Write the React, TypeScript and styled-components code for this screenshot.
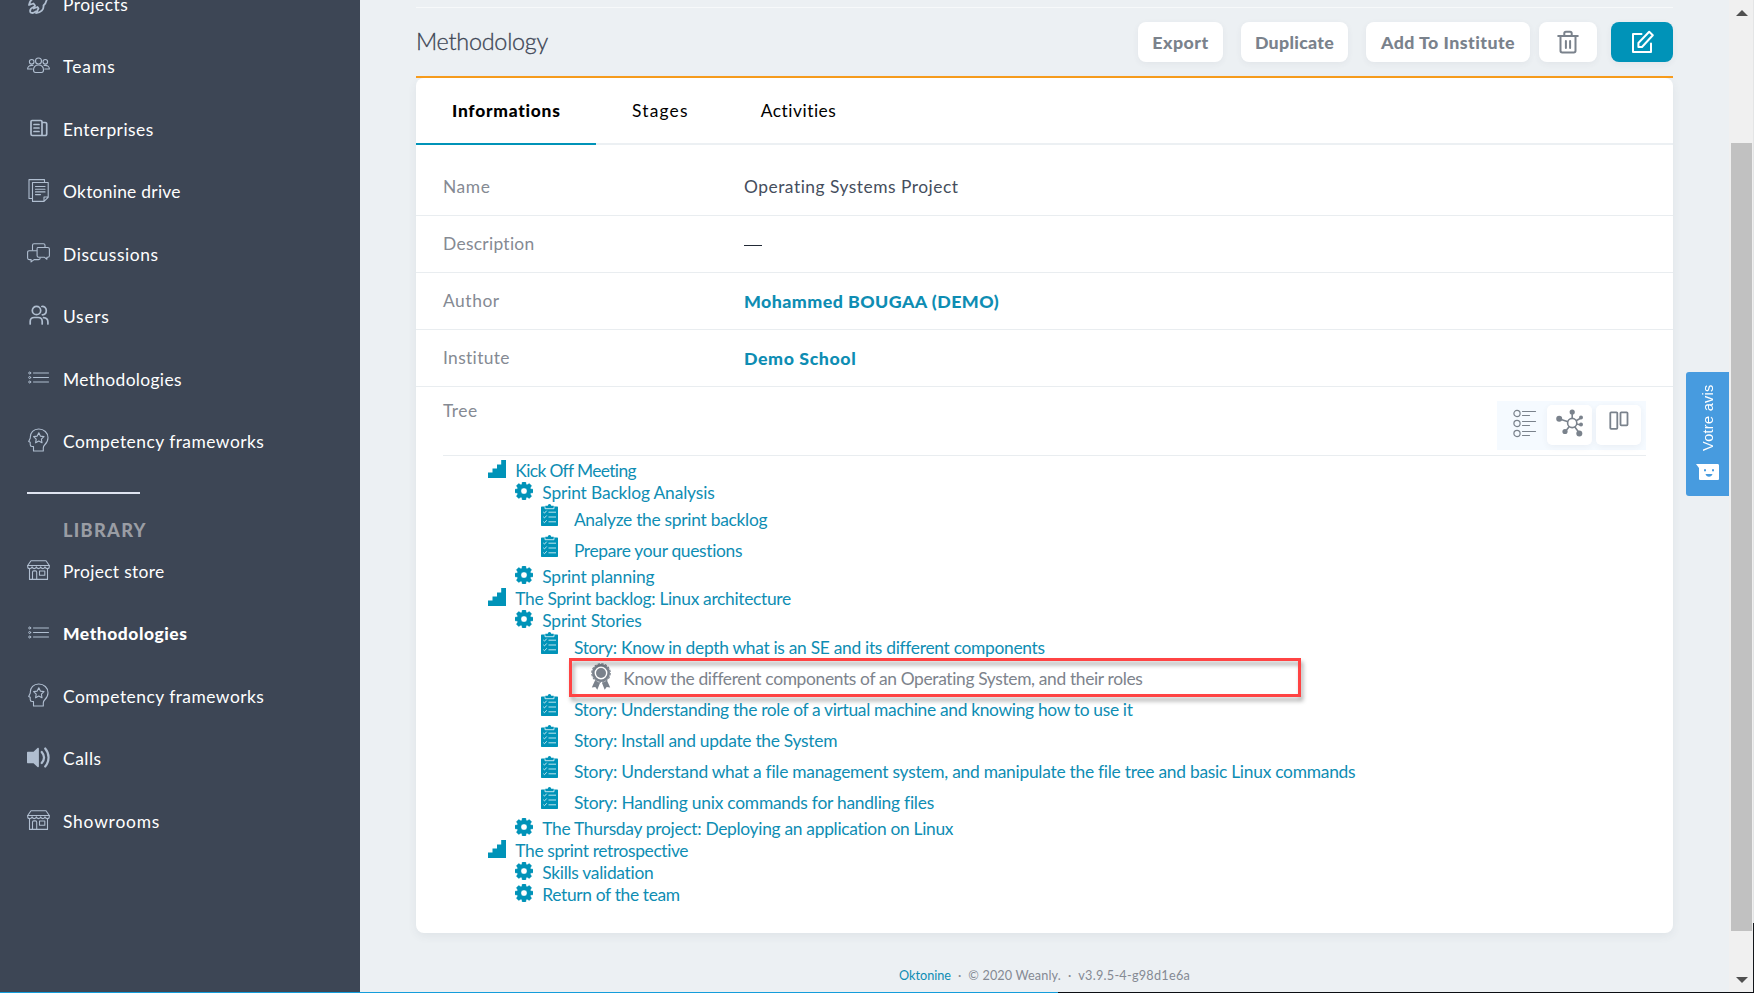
import React from 'react';
import styled, { createGlobalStyle, css } from 'styled-components';

const GlobalStyle = createGlobalStyle`
  * { box-sizing: border-box; }
  html, body { margin: 0; height: 100%; overflow: hidden; }
  body { font-family: Lato, "Open Sans", sans-serif; font-size: 17.4px; background: #ecf0f3; }
  #root { height: 100vh; }
  svg { display: block; flex: none; }
`;

/* ---------- shell ---------- */

const Page = styled.div`
  position: relative;
  display: grid;
  grid-template-rows: 1fr 1px;
  width: 1754px;
  height: 993px;
  overflow: hidden;
`;

const Shell = styled.div`
  display: grid;
  grid-template-columns: 360px 1369px 24px 1px;
  min-height: 0;
`;

const BottomEdge = styled.div`
  background: linear-gradient(to right, #149ddb 1058px, #0a0d12 1058px);
`;

const RightEdge = styled.div`
  background: linear-gradient(to bottom, #e4e5e6 923px, #14171b 923px);
`;

/* ---------- sidebar ---------- */

const Sidebar = styled.nav`
  display: flex;
  flex-direction: column;
  overflow: hidden;
  background: #3d4655;
  color: #fff;
`;

const NavList = styled.div<{ $scrolled?: boolean }>`
  display: flex;
  flex-direction: column;
  flex: none;
  margin-top: ${p => (p.$scrolled ? '-27px' : '0')};
`;

const NavItem = styled.a<{ $active?: boolean }>`
  display: flex;
  align-items: center;
  gap: 13px;
  height: 62.5px;
  padding-left: 27px;
  font-weight: ${p => (p.$active ? 900 : 400)};
`;

const NavIcon = styled.span`
  display: flex;
  justify-content: center;
  width: 23px;
  padding-bottom: 3px;
  color: #b0bed0;
`;

const Text = styled.span<{ $ls?: number }>`
  letter-spacing: ${p => p.$ls ?? 0}px;
  white-space: nowrap;
`;

const NavRule = styled.hr`
  width: 113px;
  height: 2px;
  flex: none;
  margin: 19px 0 25px 27px;
  border: 0;
  background: #dfe4f0;
`;

const NavHeading = styled.h2`
  flex: none;
  height: 21px;
  margin: 0;
  padding-left: 63px;
  font-size: 18.2px;
  line-height: 23px;
  font-weight: 900;
  letter-spacing: 1.3px;
  color: #9a9da4;
`;

/* ---------- main ---------- */

const Main = styled.main`
  display: flex;
  flex-direction: column;
  padding: 7px 56px 0;
  background: #ecf0f3;
`;

const PageHeader = styled.header`
  display: flex;
  align-items: center;
  justify-content: space-between;
  height: 71px;
  border-top: 1px solid #f7f9fa;
  border-bottom: 2px solid #f99d1c;
`;

const Title = styled.h1`
  margin: 0;
  padding-bottom: 2px;
  font-size: 23.4px;
  line-height: 28px;
  font-weight: 300;
  letter-spacing: -0.25px;
  color: #3d4655;
  -webkit-text-stroke: 0.3px #3d4655;
`;

const Actions = styled.div`
  display: flex;
`;

const Button = styled.button<{ $width: number; $gap?: number; $primary?: boolean }>`
  display: flex;
  align-items: center;
  justify-content: center;
  width: ${p => p.$width}px;
  height: 40px;
  margin-left: ${p => p.$gap ?? 0}px;
  padding: 0 0 1px;
  border: 0;
  border-radius: 8px;
  font: 900 17.8px Lato, sans-serif;
  color: ${p => (p.$primary ? '#fff' : '#7a828c')};
  background: ${p => (p.$primary ? '#0093b8' : '#fff')};
  box-shadow: 0 2px 6px rgba(60, 75, 90, 0.06);
`;

const Card = styled.section`
  display: flex;
  flex-direction: column;
  height: 855px;
  border-radius: 8px;
  background: #fff;
  box-shadow: 0 3px 10px rgba(60, 75, 90, 0.07);
`;

const Tabs = styled.div`
  display: flex;
  height: 67px;
  border-bottom: 2px solid #ecf0f3;
`;

const Tab = styled.a<{ $active?: boolean }>`
  height: 67px;
  padding: 21px 36px 0;
  line-height: 24px;
  color: #000;
  ${p => p.$active && css`
    width: 180px;
    font-weight: 900;
    border-bottom: 2px solid #0093b8;
  `}
`;

const Fields = styled.dl`
  margin: 0;
  padding-top: 14px;
`;

const Field = styled.div`
  display: grid;
  grid-template-columns: 301px 1fr;
  height: 57px;
  padding: 0 27px;
  line-height: 56px;
  border-bottom: 1px solid #e9edf0;
`;

const FieldName = styled.dt`
  color: #858a93;
`;

const FieldValue = styled.dd<{ $link?: boolean }>`
  margin: 0;
  font-size: ${p => (p.$link ? 17.8 : 17.4)}px;
  color: ${p => (p.$link ? '#0e8db3' : '#454e5d')};
  font-weight: ${p => (p.$link ? 900 : 400)};
`;

const Dash = styled.span`
  display: inline-block;
  width: 18px;
  height: 1px;
  vertical-align: 4px;
  background: #222a36;
`;

const TreePanel = styled.div`
  padding: 0 27px;
`;

const TreeHeader = styled.div`
  display: flex;
  justify-content: space-between;
  height: 69px;
  padding-top: 14px;
  border-bottom: 1px solid #e9edf0;
  color: #858a93;
  line-height: 19px;
`;

const ViewSwitch = styled.div`
  display: flex;
  gap: 4px;
  height: 49px;
  padding: 4px 5px;
  background: #f5faff;
  color: #7a828c;
`;

const ViewButton = styled.button<{ $active?: boolean }>`
  display: flex;
  align-items: flex-start;
  justify-content: center;
  width: ${p => (p.$active ? 41 : 45)}px;
  height: 40px;
  padding: 4px 0 0 ${p => (p.$active ? 5 : 0)}px;
  border: 0;
  border-radius: 5px;
  color: inherit;
  background: ${p => (p.$active ? 'transparent' : '#fff')};
  box-shadow: ${p => (p.$active ? 'none' : '0 2px 6px rgba(60, 75, 90, 0.06)')};
`;

/* ---------- tree ---------- */

type Kind = 'stage' | 'activity' | 'task' | 'skill';

const indent: Record<Kind, number> = { stage: 45, activity: 72, task: 97.5, skill: 147.5 };
const iconColumn: Record<Kind, number> = { stage: 27.3, activity: 27.3, task: 33.4, skill: 32.8 };

const TreeList = styled.ul`
  margin: 0;
  padding: 4px 0 0;
  list-style: none;
`;

const TreeRow = styled.li<{ $kind: Kind }>`
  position: relative;
  display: grid;
  grid-template-columns: ${p => iconColumn[p.$kind]}px auto;
  justify-content: start;
  height: ${p => (p.$kind === 'task' || p.$kind === 'skill' ? 31 : 22)}px;
  padding-left: ${p => indent[p.$kind]}px;
  line-height: ${p => (p.$kind === 'task' || p.$kind === 'skill' ? 31 : 22)}px;
  color: ${p => (p.$kind === 'skill' ? '#7d838c' : '#0e8db3')};
  svg { color: ${p => (p.$kind === 'skill' ? '#7a828c' : '#0093b8')}; }
`;

const Highlight = styled.span`
  position: absolute;
  left: 126px;
  top: -5px;
  width: 732px;
  height: 39px;
  border: 3px solid #ff4343;
  filter: drop-shadow(2px 4px 2px rgba(0, 0, 0, 0.35));
`;

/* ---------- footer, scrollbar, feedback ---------- */

const Footer = styled.footer`
  display: flex;
  justify-content: center;
  gap: 7px;
  padding: 33px 0 0;
  font-size: 12.7px;
  line-height: 18px;
  color: #858a93;
`;

const FooterLink = styled.a`
  color: #0e8db3;
`;

const Scrollbar = styled.div`
  display: grid;
  grid-template-rows: 143px 788px 61px;
  padding: 0 1px 0 2px;
  background: #f0f0f0;
`;

const ScrollEnd = styled.div<{ $bottom?: boolean }>`
  display: flex;
  justify-content: center;
  align-items: ${p => (p.$bottom ? 'flex-end' : 'flex-start')};
  padding: 10px 0 9px;
`;

const ScrollThumb = styled.div`
  background: #c1c1c1;
`;

const Feedback = styled.button`
  position: absolute;
  left: 1686px;
  top: 372px;
  display: flex;
  flex-direction: column;
  align-items: center;
  gap: 12px;
  width: 43px;
  height: 124px;
  padding: 12px 0 0;
  border: 0;
  border-radius: 3px 0 0 3px;
  background: #479bdf;
  color: #fff;
`;

const FeedbackText = styled.span`
  height: 68px;
  writing-mode: vertical-rl;
  transform: rotate(180deg);
  font: 14.5px/18px "Liberation Sans", sans-serif;
  letter-spacing: 0.3px;
  white-space: nowrap;
`;

/* ---------- icons ---------- */

const Line = ({ w = 23, h = 23, sw = 1.1, children }: { w?: number; h?: number; sw?: number; children: React.ReactNode }) => (
  <svg width={w} height={h} viewBox={`0 0 ${w} ${h}`} fill="none" stroke="currentColor" strokeWidth={sw} strokeLinejoin="round" strokeLinecap="round">
    {children}
  </svg>
);

const RocketIcon = () => (
  <Line sw={1.8}>
    <path d="M20.500 2c-1 .5-8 1-11 5.500-3.800-.6-6.500 1.500-7.500 6.500l4.500-1.500 1.500 2-1.500 3 4-1.500 1 1.500-2.500 4.500c5-.5 8-3.500 7.500-7.500C20 11.500 20.500 6.500 20.500 2z" />
    <path d="M6.500 16c-2.500 1-4 3-3 5.500 2 .8 4 .3 5-1" />
  </Line>
);

const TeamIcon = () => (
  <Line h={17}>
    <circle cx="11.500" cy="4" r="3" />
    <circle cx="4.700" cy="4.800" r="2.300" />
    <circle cx="18.300" cy="4.800" r="2.300" />
    <path d="M6.500 13c0-3.200 1.800-5 5-5s5 1.800 5 5c0 1.800-.6 2.500-2 2.500h-6c-1.400 0-2-.7-2-2.500z" />
    <path d="M6 8.500C2.500 8 .6 9.500.6 12h4.600M17 8.500c3.500-.5 5.400 1 5.400 3.500h-4.600" />
  </Line>
);

const EnterpriseIcon = () => (
  <Line w={18} h={18} sw={1.700}>
    <path d="M2 1.500h8.800c.8 0 1.200.4 1.200 1.200v13.800H2.500c-1 0-1.500-.6-1.500-1.500V2.500c0-.6.4-1 1-1zM12 3.500h3.300c.8 0 1.400.5 1.400 1.300v9.900c0 1.100-.6 1.800-1.600 1.800H12" />
    <path d="M4 5.500h5M4 9h5M4 12.500h5" />
  </Line>
);

const DriveIcon = () => (
  <Line w={21}>
    <path d="M4.500 3.500h15.700v14.800L16 22.400H4.500zM20 18h-4v4.400" />
    <path d="M4 19.500H1V.6h15.500v2.400M7.500 7.500h9.500M7.500 10.200h9.500M7.500 12.900h9.500M7.500 15.600h5" />
  </Line>
);

const DiscussionIcon = () => (
  <Line h={20}>
    <path d="M5.500 7V2.200C5.500 1.300 6 .8 7 .8h9.500c1 0 1.500.5 1.500 1.400v1.600" />
    <path d="M10.700 4.500h10c1.200 0 1.700.5 1.700 1.600v6.600c0 1-.5 1.600-1.600 1.600h-.9v2l-2.300-2h-5.900c-1.100 0-1.600-.6-1.600-1.600V5.800c0-.8.300-1.300.6-1.300z" />
    <path d="M9.500 7.800H2.200C1 7.800.6 8.400.6 9.400V15c0 1 .6 1.600 1.600 1.600h1.900v2.300l3-2.300h4.400c1 0 1.700-.5 1.700-1.600" />
  </Line>
);

const UsersIcon = () => (
  <Line w={20} h={20} sw={1.700}>
    <circle cx="7.500" cy="5.500" r="4.200" />
    <path d="M12.800 1.500c2.500-.3 4.500 1.600 4.500 4s-1.600 4.100-4 4.300M1.200 19v-2.500c0-2.600 1.400-4 4-4h4c2.600 0 4 1.400 4 4V19M14.500 12.700c3 .2 4.400 1.500 4.400 4.300v2" />
  </Line>
);

const ListIcon = () => (
  <Line w={21} h={13} sw={1}>
    <circle cx="1.700" cy="2" r="1" /><circle cx="1.700" cy="6.500" r="1" /><circle cx="1.700" cy="11" r="1" />
    <path d="M5.500 2h15M5.500 6.500h15M5.500 11h15" />
  </Line>
);

const HeadStarIcon = () => (
  <Line w={21} h={24}>
    <path d="M5.500 23v-4.500H4c-1.300 0-1.800-.7-1.800-2v-2.200l-1.500-.8L2.300 10C2 4.500 5.800 1 10.700 1c5.300 0 9.300 3.800 9.300 8.700 0 3.600-1.500 5.500-3.400 7.300-.9.900-1.300 1.700-1.300 3V23z" />
    <path d="M10.800 4.800l1.600 3.300 3.600.5-2.600 2.600.6 3.600-3.200-1.700-3.200 1.700.6-3.600-2.600-2.600 3.600-.5z" />
  </Line>
);

const StoreIcon = () => (
  <Line h={20}>
    <path d="M4 .8h15l3.300 4.700H.700z" />
    <path d="M.7 5.500v1.200c0 2.600 4 2.600 4.300 0 .4 2.600 4 2.600 4.300 0 .4 2.600 4 2.600 4.300 0 .4 2.600 4 2.600 4.300 0 .4 2.600 4.400 2.600 4.400 0V5.500" />
    <path d="M2.500 8.800v10.600h18V8.800M5.500 19v-6.800c0-.9.400-1.300 1.200-1.300h1.800c.8 0 1.200.4 1.200 1.300V19M12.500 11h5.300v4.300h-5.300z" />
  </Line>
);

const SpeakerIcon = () => (
  <svg width="23" height="21" viewBox="0 0 23 21" fill="none" stroke="currentColor" strokeWidth="2.200" strokeLinecap="round">
    <path d="M1 4.800h5.500L10.500 1c.8-.5 1.400-.2 1.400.7v17.600c0 .9-.6 1.200-1.400.7l-4-3.800H1c-.7 0-1-.3-1-1V5.800c0-.7.3-1 1-1z" fill="currentColor" stroke="none" />
    <path d="M14.700 5c2.900 3.400 2.900 7.600 0 11M18.200 1.500c4.500 5.300 4.500 12.700 0 18" />
  </svg>
);

const TrashIcon = () => (
  <Line w={22} h={24} sw={2}>
    <path d="M1.200 6h19.600M3.500 6.500v14.300c0 1.100.6 1.700 1.700 1.700h11.600c1.100 0 1.700-.6 1.700-1.700V6.500M7.300 5.500V3.300c0-1 .6-1.600 1.600-1.600h4.200c1 0 1.600.6 1.600 1.600v2.200M8.900 11v7M13.100 11v7" />
  </Line>
);

const EditIcon = () => (
  <Line w={24} h={24} sw={2}>
    <path d="M11.500 4H3v18h18v-8.500" />
    <path d="M19.200 1.800L22.800 5.200 12 17H8.400v-4z" />
  </Line>
);

const DetailListIcon = () => (
  <Line w={24} h={30} sw={1.200}>
    {[4.500, 14.500, 24.500].map(y => (
      <g key={y}>
        <circle cx="4" cy={y} r="3.100" />
        <path d={`M9.500 ${y - 2}h13M9.500 ${y + 2}h7`} />
      </g>
    ))}
  </Line>
);

const GraphIcon = () => (
  <svg width="28" height="28" viewBox="0 0 28 28" fill="currentColor" stroke="currentColor" strokeWidth="1.600">
    <path d="M16.200 14V3M16 14L3.500 10M16 14l9-5M16 14l9 2M16 14L9 23M16 14l8 11" />
    <circle cx="16.200" cy="14" r="4.600" fill="#fff" />
    <g stroke="none">
      <circle cx="16.200" cy="3" r="2.600" /><circle cx="3.200" cy="9.800" r="3" />
      <circle cx="25" cy="8.500" r="2" /><circle cx="25" cy="15.600" r="2" />
      <circle cx="9" cy="22.500" r="2.600" /><circle cx="23.300" cy="24.500" r="3" />
    </g>
  </svg>
);

const BoardIcon = () => (
  <Line w={20} h={24} sw={1.800}>
    <rect x="1.300" y="3.300" width="7" height="16.500" rx=".8" />
    <rect x="11.500" y="3.300" width="7" height="13" rx=".8" />
  </Line>
);

const StairsIcon = () => (
  <svg width="18" height="18" viewBox="0 0 18 18" fill="currentColor">
    <path d="M0 18v-5.500h4.500v-4h4.500v-4h4.200V0H18v18z" />
  </svg>
);

const GearIcon = () => (
  <svg width="18" height="18" viewBox="0 0 18 18" fill="currentColor">
    <path fillRule="evenodd" d="M7.300 0h3.400l.5 2.400 1 .4 2.100-1.300 2.300 2.300-1.300 2.100.4 1 2.300.4v3.400l-2.300.4-.4 1 1.300 2.100-2.300 2.300-2.100-1.300-1 .4-.5 2.400H7.300l-.5-2.400-1-.4-2.100 1.300-2.300-2.300 1.300-2.100-.4-1L0 10.700V7.300l2.300-.4.4-1-1.300-2.100 2.300-2.300 2.100 1.300 1-.4zM9 5.900a3.100 3.100 0 1 0 0 6.200 3.100 3.100 0 0 0 0-6.200z" stroke="currentColor" strokeWidth=".4" strokeLinejoin="round" />
  </svg>
);

const ClipboardIcon = () => (
  <svg width="17" height="22" viewBox="0 0 17 22">
    <path d="M1 2.500h3.300V1.800h2.500C7 .7 7.500 0 8.500 0s1.500.7 1.700 1.800h2.500v.7H16c.7 0 1 .4 1 1V21c0 .7-.3 1-1 1H1c-.7 0-1-.3-1-1V3.500c0-.6.300-1 1-1z" fill="currentColor" />
    <path d="M4 2.700v2h9v-2M7.500 8.200H15M7.500 13H15M7.500 17.800H15M2.300 8l1.200 1.100 2.200-2.400M2.300 12.800l1.200 1.100 2.200-2.400M2.300 17.600l1.200 1.100 2.200-2.400" fill="none" stroke="#d4edf4" strokeWidth=".9" />
  </svg>
);

const RibbonIcon = () => (
  <svg width="20" height="27" viewBox="0 0 20 27" fill="currentColor">
    <path d="M4 17.500L.8 24.500l3.500-.4L6.300 26.700 9 20zM16 17.500l3.200 7-3.500-.4-2 2.600L11 20z" />
    <circle cx="10" cy="10" r="7.700" fill="#fff" stroke="currentColor" strokeWidth="2.600" />
    <circle cx="10" cy="10" r="9.200" fill="none" stroke="currentColor" strokeWidth="1.200" strokeDasharray="2.400 1.210" />
    <circle cx="10" cy="10" r="5" />
  </svg>
);

const SmileyBubbleIcon = () => (
  <svg width="24" height="16" viewBox="0 0 24 16">
    <path d="M0 0h21.500C22.500 0 23 .6 23 1.600v12.800c0 1-.5 1.600-1.500 1.600h-17C3.500 16 3 15.400 3 14.400V4z" fill="#fff" />
    <path d="M8 5.200h2v2H8zM16 5.200h2v2h-2zM9.500 10h7c-.6 1.800-1.700 2.700-3.500 2.700S10.100 11.800 9.500 10z" fill="#479bdf" />
  </svg>
);

const Triangle = ({ down }: { down?: boolean }) => (
  <svg width="12" height="6" viewBox="0 0 12 6" fill="#505050"><path d={down ? 'M0 0h12L6 6z' : 'M0 6h12L6 0z'} /></svg>
);

/* ---------- data ---------- */

type Nav = { label: string; ls: number; icon: React.FC; active?: boolean };

const mainNav: Nav[] = [
  { label: 'Projects', ls: 0.45, icon: RocketIcon },
  { label: 'Teams', ls: 1.0, icon: TeamIcon },
  { label: 'Enterprises', ls: 0.46, icon: EnterpriseIcon },
  { label: 'Oktonine drive', ls: 0.27, icon: DriveIcon },
  { label: 'Discussions', ls: 0.6, icon: DiscussionIcon },
  { label: 'Users', ls: 0.74, icon: UsersIcon },
  { label: 'Methodologies', ls: 0.35, icon: ListIcon },
  { label: 'Competency frameworks', ls: 0.48, icon: HeadStarIcon },
];

const libraryNav: Nav[] = [
  { label: 'Project store', ls: 0.34, icon: StoreIcon },
  { label: 'Methodologies', ls: 0.57, icon: ListIcon, active: true },
  { label: 'Competency frameworks', ls: 0.48, icon: HeadStarIcon },
  { label: 'Calls', ls: 0.51, icon: SpeakerIcon },
  { label: 'Showrooms', ls: 0.81, icon: StoreIcon },
];

const tree: { kind: Kind; label: string; ls: number }[] = [
  { kind: 'stage', label: 'Kick Off Meeting', ls: -0.64 },
  { kind: 'activity', label: 'Sprint Backlog Analysis', ls: -0.15 },
  { kind: 'task', label: 'Analyze the sprint backlog', ls: -0.28 },
  { kind: 'task', label: 'Prepare your questions', ls: -0.32 },
  { kind: 'activity', label: 'Sprint planning', ls: -0.17 },
  { kind: 'stage', label: 'The Sprint backlog: Linux architecture', ls: -0.32 },
  { kind: 'activity', label: 'Sprint Stories', ls: -0.2 },
  { kind: 'task', label: 'Story: Know in depth what is an SE and its different components', ls: -0.3 },
  { kind: 'skill', label: 'Know the different components of an Operating System, and their roles', ls: -0.35 },
  { kind: 'task', label: 'Story: Understanding the role of a virtual machine and knowing how to use it', ls: -0.325 },
  { kind: 'task', label: 'Story: Install and update the System', ls: -0.28 },
  { kind: 'task', label: 'Story: Understand what a file management system, and manipulate the file tree and basic Linux commands', ls: -0.263 },
  { kind: 'task', label: 'Story: Handling unix commands for handling files', ls: -0.24 },
  { kind: 'activity', label: 'The Thursday project: Deploying an application on Linux', ls: -0.3 },
  { kind: 'stage', label: 'The sprint retrospective', ls: -0.37 },
  { kind: 'activity', label: 'Skills validation', ls: -0.29 },
  { kind: 'activity', label: 'Return of the team', ls: -0.34 },
];

const treeIcons: Record<Kind, React.FC> = {
  stage: StairsIcon,
  activity: GearIcon,
  task: ClipboardIcon,
  skill: RibbonIcon,
};

const NavItems = ({ items, scrolled }: { items: Nav[]; scrolled?: boolean }) => (
  <NavList $scrolled={scrolled}>
    {items.map(({ label, ls, icon: Icon, active }) => (
      <NavItem key={label} $active={active}>
        <NavIcon><Icon /></NavIcon>
        <Text $ls={ls}>{label}</Text>
      </NavItem>
    ))}
  </NavList>
);

export default function App() {
  return (
    <>
      <GlobalStyle />
      <Page>
        <Shell>
          <Sidebar>
            <NavItems items={mainNav} scrolled />
            <NavRule />
            <NavHeading>LIBRARY</NavHeading>
            <NavItems items={libraryNav} />
          </Sidebar>

          <Main>
            <PageHeader>
              <Title>Methodology</Title>
              <Actions>
                <Button $width={85}><Text $ls={0.5}>Export</Text></Button>
                <Button $width={107} $gap={18}><Text $ls={0.3}>Duplicate</Text></Button>
                <Button $width={164} $gap={18}><Text $ls={0.45}>Add To Institute</Text></Button>
                <Button $width={58} $gap={9} aria-label="Delete"><TrashIcon /></Button>
                <Button $width={62} $gap={14} $primary aria-label="Edit"><EditIcon /></Button>
              </Actions>
            </PageHeader>

            <Card>
              <Tabs>
                <Tab $active><Text $ls={0.75}>Informations</Text></Tab>
                <Tab><Text $ls={1.2}>Stages</Text></Tab>
                <Tab><Text $ls={0.5}>Activities</Text></Tab>
              </Tabs>
              <Fields>
                <Field>
                  <FieldName><Text $ls={0.6}>Name</Text></FieldName>
                  <FieldValue><Text $ls={0.5}>Operating Systems Project</Text></FieldValue>
                </Field>
                <Field>
                  <FieldName><Text $ls={0.3}>Description</Text></FieldName>
                  <FieldValue><Dash /></FieldValue>
                </Field>
                <Field>
                  <FieldName><Text $ls={0.55}>Author</Text></FieldName>
                  <FieldValue $link><Text $ls={0.44}>Mohammed BOUGAA (DEMO)</Text></FieldValue>
                </Field>
                <Field>
                  <FieldName><Text $ls={0.35}>Institute</Text></FieldName>
                  <FieldValue $link><Text $ls={0.57}>Demo School</Text></FieldValue>
                </Field>
              </Fields>
              <TreePanel>
                <TreeHeader>
                  <Text $ls={0.5}>Tree</Text>
                  <ViewSwitch>
                    <ViewButton $active aria-label="List view"><DetailListIcon /></ViewButton>
                    <ViewButton aria-label="Graph view"><GraphIcon /></ViewButton>
                    <ViewButton aria-label="Board view"><BoardIcon /></ViewButton>
                  </ViewSwitch>
                </TreeHeader>
                <TreeList>
                  {tree.map(({ kind, label, ls }) => {
                    const Icon = treeIcons[kind];
                    return (
                      <TreeRow key={label} $kind={kind}>
                        <Icon />
                        <Text $ls={ls}>{label}</Text>
                        {kind === 'skill' && <Highlight />}
                      </TreeRow>
                    );
                  })}
                </TreeList>
              </TreePanel>
            </Card>

            <Footer>
              <FooterLink><Text $ls={0}>Oktonine</Text></FooterLink>
              <span>·</span>
              <Text $ls={0.12}>© 2020 Weanly.</Text>
              <span>·</span>
              <Text $ls={0.25}>v3.9.5-4-g98d1e6a</Text>
            </Footer>
          </Main>

          <Scrollbar>
            <ScrollEnd><Triangle /></ScrollEnd>
            <ScrollThumb />
            <ScrollEnd $bottom><Triangle down /></ScrollEnd>
          </Scrollbar>
          <RightEdge />
        </Shell>
        <BottomEdge />

        <Feedback>
          <FeedbackText>Votre avis</FeedbackText>
          <SmileyBubbleIcon />
        </Feedback>
      </Page>
    </>
  );
}
